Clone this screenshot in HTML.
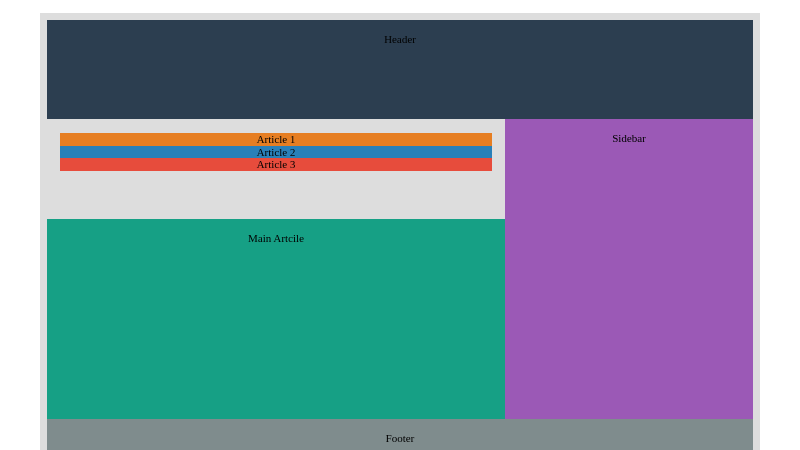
<!DOCTYPE html>
<html><head><style>
html,body{margin:0;height:450px;overflow:hidden}
body{background:#fff;width:800px;font-family:"Liberation Serif",serif;font-size:11px;color:#000;position:relative}
.o{position:absolute;left:40px;top:13px;width:720px;height:437px;background:#dddddd}
.b{position:absolute;text-align:center;box-sizing:border-box}
</style></head><body>
<div class="o"></div>
<div class="b" style="left:47px;top:20px;width:706px;height:99px;background:#2c3e50;padding-top:14px">Header</div>
<div class="b" style="left:60px;top:133px;width:432px;height:13px;background:#e67e22;line-height:13px;padding-top:1px">Article 1</div>
<div class="b" style="left:60px;top:146px;width:432px;height:12px;background:#2980b9;line-height:12px;padding-top:1px">Article 2</div>
<div class="b" style="left:60px;top:158px;width:432px;height:13px;background:#e74c3c;line-height:13px;padding-top:1px">Article 3</div>
<div class="b" style="left:505px;top:119px;width:248px;height:300px;background:#9b59b6;padding-top:14px">Sidebar</div>
<div class="b" style="left:47px;top:219px;width:458px;height:200px;background:#16a085;padding-top:14px">Main Artcile</div>
<div class="b" style="left:47px;top:419px;width:706px;height:31px;background:#7f8c8d;padding-top:14px">Footer</div>
</body></html>
